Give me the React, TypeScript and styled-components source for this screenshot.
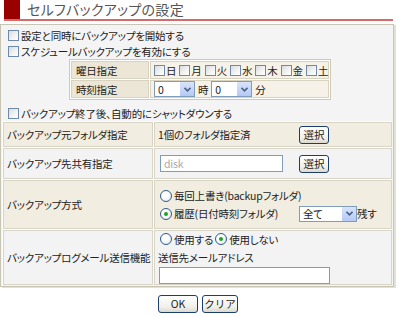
import React from "react";
import styled, { createGlobalStyle } from "styled-components";

const Global = createGlobalStyle`
  html, body { margin: 0; padding: 0; background: #fff; }
  body {
    font-family: "Noto Sans CJK JP", "Noto Sans", sans-serif;
    font-size: 10.5px;
    letter-spacing: -0.2px;
    color: #222;
    font-feature-settings: "palt";
  }
  * { box-sizing: border-box; }
`;

const Page = styled.div`
  width: 400px;
  height: 317px;
`;

const Header = styled.div`
  display: flex;
  align-items: flex-end;
  height: 21px;
  margin: 0 7px 0 4px;
  border-bottom: 2px solid #d46a6a;
`;

const Square = styled.div`
  width: 16px;
  height: 19px;
  background: #990000;
`;

const Title = styled.h1`
  margin: 0 0 0 7px;
  font-size: 14px;
  font-weight: normal;
  line-height: 19px;
  color: #555;
  letter-spacing: 0.3px;
`;

const Box = styled.div`
  margin-top: 3px;
  width: 394px;
  border: 1px solid #c9c5b5;
  background: #f4f4f4;
  box-shadow: 2px 1px 0 #e4e1d4;
  padding: 2px 1px 1px 1px;
`;

const CheckRow = styled.label`
  display: flex;
  align-items: center;
  height: 16px;
  padding-left: 6px;
  gap: 2px;
`;

const Check = styled.span`
  display: inline-block;
  width: 11px;
  height: 11px;
  border: 1px solid #6f8aa8;
  background: linear-gradient(135deg, #d8dbe0 0%, #f4f4f2 60%, #fff 100%);
  flex: none;
`;

const Sched = styled.div`
  margin: 0 0 5px 67px;
  width: 262px;
  display: grid;
  grid-template-columns: 78px 1fr;
  gap: 1px;
  background: #fff;
  border: 1px solid #cfcab8;
  padding: 1px;
`;

const SchedLabel = styled.div`
  background: #ece6d6;
  border: 1px solid #d8d2c0;
  height: 18px;
  display: flex;
  align-items: center;
  padding-left: 4px;
`;

const SchedValue = styled.div<{ $gap: number }>`
  background: #f6f2e8;
  border: 1px solid #d8d2c0;
  height: 18px;
  display: flex;
  align-items: center;
  padding-left: 3px;
  gap: ${(p) => p.$gap}px;
`;

const Day = styled.label`
  display: flex;
  align-items: center;
  gap: 1px;
`;

const Select = styled.div<{ $w: number }>`
  width: ${(p) => p.$w}px;
  height: 16px;
  border: 1px solid #7f9db9;
  background: #fff;
  display: flex;
  align-items: center;
  justify-content: space-between;
  padding-left: 3px;
  flex: none;
`;

const Arrow = styled.span`
  width: 15px;
  height: 14px;
  background: linear-gradient(#d8e4fb, #b5c9f4);
  border-left: 1px solid #fff;
  display: flex;
  align-items: center;
  justify-content: center;
`;

const Main = styled.div`
  display: grid;
  grid-template-columns: 150px 1fr;
  gap: 1px;
  background: #fff;
  padding: 1px 0 0 1px;
`;

const Cell = styled.div<{ $bg: string; $h: number }>`
  background: ${(p) => p.$bg};
  border: 1px solid #d8d4c6;
  min-height: ${(p) => p.$h}px;
  display: flex;
  align-items: center;
  padding-left: 3px;
  white-space: nowrap;
`;

const ValueCell = styled(Cell)`
  flex-direction: column;
  align-items: stretch;
  justify-content: center;
  gap: 2px;
`;

const Line = styled.div`
  display: flex;
  align-items: center;
  min-height: 16px;
`;

const Fixed = styled.span<{ $w: number }>`
  display: inline-block;
  width: ${(p) => p.$w}px;
  flex: none;
`;

const Button = styled.button<{ $w: number }>`
  width: ${(p) => p.$w}px;
  height: 18px;
  padding: 0;
  border: 1px solid #1b3e6e;
  border-radius: 3px;
  background: linear-gradient(#ffffff, #f0efe8 70%, #dcd8cb);
  font-family: inherit;
  font-size: 10.5px;
  color: #222;
  line-height: 16px;
`;

const Input = styled.div<{ $w: number; $muted?: boolean; $ml: number }>`
  width: ${(p) => p.$w}px;
  height: 17px;
  margin-left: ${(p) => p.$ml}px;
  border: 1px solid #7f9db9;
  background: #fff;
  color: ${(p) => (p.$muted ? "#aaa" : "#222")};
  padding-left: 3px;
  display: flex;
  align-items: center;
  flex: none;
`;

const Radio = styled.span<{ $on?: boolean }>`
  width: 12px;
  height: 12px;
  border-radius: 50%;
  border: 1px solid #2f5b8c;
  background: radial-gradient(circle at 40% 40%, #fff 30%, #dfe3ea 100%);
  display: inline-flex;
  align-items: center;
  justify-content: center;
  margin: 0 2px 0 2px;
  flex: none;
  &::after {
    content: "";
    display: ${(p) => (p.$on ? "block" : "none")};
    width: 4px;
    height: 4px;
    border-radius: 50%;
    background: #21a121;
  }
`;

const Footer = styled.div`
  display: flex;
  justify-content: center;
  gap: 4px;
  margin-top: 8px;
  padding-right: 4px;
`;

const SelectArrow = () => (
  <Arrow>
    <svg width="7" height="5" viewBox="0 0 7 5">
      <path d="M0.5 0.8 L3.5 3.8 L6.5 0.8" stroke="#4d6185" strokeWidth="1.6" fill="none" />
    </svg>
  </Arrow>
);

const days = ["日", "月", "火", "水", "木", "金", "土"];

export default function App() {
  return (
    <Page>
      <Global />
      <Header>
        <Square />
        <Title>セルフバックアップの設定</Title>
      </Header>
      <Box>
        <CheckRow>
          <Check />
          設定と同時にバックアップを開始する
        </CheckRow>
        <CheckRow>
          <Check />
          スケジュールバックアップを有効にする
        </CheckRow>
        <Sched>
          <SchedLabel>曜日指定</SchedLabel>
          <SchedValue $gap={3}>
            {days.map((d) => (
              <Day key={d}>
                <Check />
                {d}
              </Day>
            ))}
          </SchedValue>
          <SchedLabel>時刻指定</SchedLabel>
          <SchedValue $gap={3}>
            <Select $w={41}>
              0<SelectArrow />
            </Select>
            時
            <Select $w={41}>
              0<SelectArrow />
            </Select>
            分
          </SchedValue>
        </Sched>
        <CheckRow>
          <Check />
          バックアップ終了後、自動的にシャットダウンする
        </CheckRow>
        <Main>
          <Cell $bg="#f2ede1" $h={25}>バックアップ元フォルダ指定</Cell>
          <ValueCell $bg="#f2ede1" $h={25}>
            <Line>
              <Fixed $w={141}>1個のフォルダ指定済</Fixed>
              <Button $w={30}>選択</Button>
            </Line>
          </ValueCell>
          <Cell $bg="#f3f3f3" $h={31}>バックアップ先共有指定</Cell>
          <ValueCell $bg="#f3f3f3" $h={31}>
            <Line>
              <Fixed $w={141}>
                <Input $w={123} $muted $ml={2}>disk</Input>
              </Fixed>
              <Button $w={30}>選択</Button>
            </Line>
          </ValueCell>
          <Cell $bg="#f2ede1" $h={49}>バックアップ方式</Cell>
          <ValueCell $bg="#f2ede1" $h={49}>
            <Line>
              <Radio />
              毎回上書き(backupフォルダ)
            </Line>
            <Line>
              <Fixed $w={141}>
                <Line>
                  <Radio $on />
                  履歴(日付時刻フォルダ)
                </Line>
              </Fixed>
              <Select $w={58}>
                全て<SelectArrow />
              </Select>
              残す
            </Line>
          </ValueCell>
          <Cell $bg="#f3f3f3" $h={55}>バックアップログメール送信機能</Cell>
          <ValueCell $bg="#f3f3f3" $h={55}>
            <Line>
              <Radio />
              使用する
              <Radio $on />
              使用しない
            </Line>
            <Line>送信先メールアドレス</Line>
            <Input $w={171} $ml={1} />
          </ValueCell>
        </Main>
      </Box>
      <Footer>
        <Button $w={40}>OK</Button>
        <Button $w={36}>クリア</Button>
      </Footer>
    </Page>
  );
}
